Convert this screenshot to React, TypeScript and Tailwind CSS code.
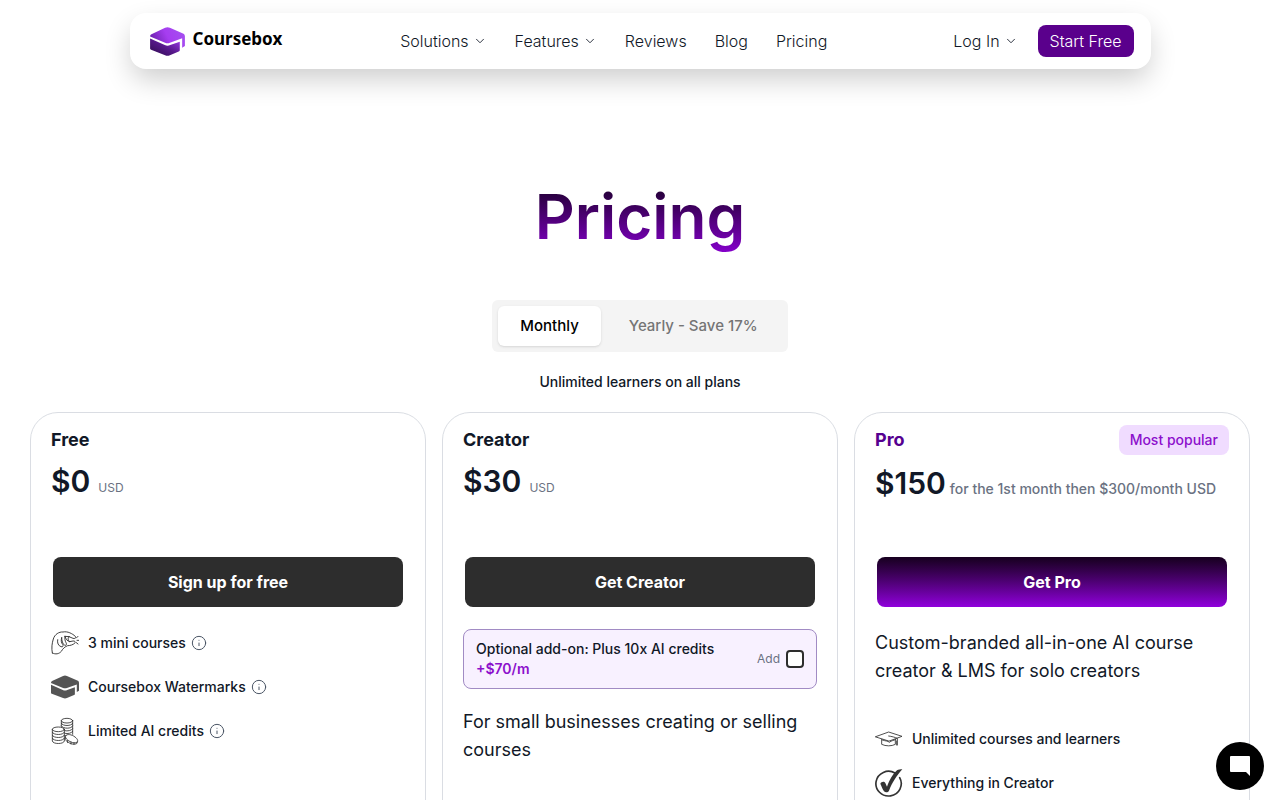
import type { ReactNode } from "react";
import { ChevronDown, Info } from "lucide-react";

const navLinks = [
  { label: "Solutions", menu: true },
  { label: "Features", menu: true },
  { label: "Reviews", menu: false },
  { label: "Blog", menu: false },
  { label: "Pricing", menu: false },
];

const CapLogo = ({ className, gradient }: { className: string; gradient?: boolean }) => (
  <svg viewBox="0 0 102 85" className={className} aria-hidden="true">
    <defs>
      <linearGradient id="lid" x1="0" y1="0.6" x2="1" y2="0.3">
        <stop offset="0" stopColor="#6a20ac" />
        <stop offset="0.5" stopColor="#a63df0" />
        <stop offset="1" stopColor="#a54ff0" />
      </linearGradient>
      <linearGradient id="body" x1="0" y1="1" x2="1" y2="0">
        <stop offset="0" stopColor="#2c0a4a" />
        <stop offset="0.5" stopColor="#56188a" />
        <stop offset="1" stopColor="#a03cf0" />
      </linearGradient>
    </defs>
    <path
      fill={gradient ? "url(#lid)" : "#555"}
      d="M0 27Q0 23 4 21L44 2Q51-1 58 2L98 20Q102 22 102 27V56L94 61V33L58 46Q51 49 44 46L0 28Z"
    />
    <path
      fill={gradient ? "url(#body)" : "#555"}
      d="M0 34L43 53Q51 57 59 53L87 43V68Q87 71 84 72L58 83Q51 86 44 83L3 67Q0 66 0 63Z"
    />
  </svg>
);

const PinchIcon = () => (
  <svg
    viewBox="0 0 84 84"
    className="w-7 h-7 shrink-0"
    fill="none"
    stroke="#333"
    strokeWidth="2.8"
    strokeLinecap="round"
    strokeLinejoin="round"
    aria-hidden="true"
  >
    <path d="M4 72C1 58 3 42 7 30C11 16 24 8 36 9C50 6 64 14 73 22C76 27 71 30 66 28L54 23" />
    <path d="M4 72C14 77 24 75 31 67C36 58 42 53 50 50C58 50 66 47 71 43C75 39 71 35 66 36L56 38" />
    <path d="M20 32C18 42 22 50 30 53C35 55 38 51 35 46C30 41 30 34 32 26" />
    <path d="M32 26C32 36 35 44 41 49C46 50 48 45 45 41C42 36 41 30 42 22" />
    <path d="M42 22C44 30 48 36 56 38M54 23C50 27 50 33 54 36M42 22L54 23" />
    <path d="M76 27L81 22M78 34L83 34M76 41L81 45" />
  </svg>
);

const CoinsIcon = () => (
  <svg
    viewBox="0 0 84 84"
    className="w-7 h-7 shrink-0"
    fill="none"
    stroke="#333"
    strokeWidth="2.6"
    strokeLinecap="round"
    aria-hidden="true"
  >
    <ellipse cx="48" cy="11" rx="17" ry="7" />
    <path d="M31 11V28M65 11V52M31 19C34 28 62 28 65 19M31 27C36 36 62 36 65 27M41 41C50 43 62 41 65 35M42 49C50 51 62 49 65 43" />
    <ellipse cx="22" cy="37" rx="18" ry="7" />
    <path d="M4 37V72C6 82 38 82 40 72V37M4 46C7 55 37 55 40 46M4 55C7 64 37 64 40 55M4 64C7 73 37 73 40 64" />
    <path d="M44 56C48 50 62 52 72 60C80 66 82 72 78 76C72 80 58 76 50 69C44 64 42 60 44 56Z" />
    <path d="M43 60V68C48 76 64 84 74 81C79 80 80 76 79 74M50 70V77M60 75V81M69 77V82" />
  </svg>
);

const GradCapIcon = () => (
  <svg
    viewBox="0 0 84 84"
    className="w-7 h-7 shrink-0"
    fill="none"
    stroke="#333"
    strokeWidth="2.6"
    strokeLinecap="round"
    strokeLinejoin="round"
    aria-hidden="true"
  >
    <path d="M2 35L41 21L81 34L43 48Z" />
    <path d="M20 43V58C32 64 50 64 61 58V43" />
    <path d="M22 45C33 49 38 47 43 52C50 46 56 47 61 44" />
    <path d="M41 33C50 34 60 37 67 40V60M65 60V48" />
  </svg>
);

const CheckIcon = () => (
  <svg viewBox="0 0 84 84" className="w-7 h-7 shrink-0" aria-hidden="true">
    <path
      d="M60 12A38 37 0 1 0 74 26"
      fill="none"
      stroke="#333"
      strokeWidth="5"
      strokeLinecap="round"
    />
    <path
      fill="#333"
      d="M16 44C19 37 28 36 31 42L36 53C43 34 54 14 66 4C70 1 77 1 82 1C66 18 51 42 42 65C39 71 31 71 27 67C22 60 20 52 16 44Z"
    />
  </svg>
);

const Feature = ({ icon, text, info }: { icon: ReactNode; text: string; info?: boolean }) => (
  <li className="flex items-center gap-[9px] h-7">
    {icon}
    <span className="text-sm font-medium">{text}</span>
    {info && (
      <button type="button" aria-label={`About ${text}`} className="-ml-1 text-gray-600">
        <Info size={16} strokeWidth={1.5} />
      </button>
    )}
  </li>
);

const Plan = ({
  name,
  price,
  note,
  action,
  popular,
  children,
}: {
  name: string;
  price: string;
  note: string;
  action: string;
  popular?: boolean;
  children: ReactNode;
}) => (
  <section className="min-h-[480px] px-5 pt-3 pb-10 border border-gray-300/80 rounded-[28px]">
    <div className="min-h-[132px]">
      <div className="flex items-center justify-between">
        <h2
          className={
            popular
              ? "text-lg leading-[30px] font-bold text-[#560090]"
              : "text-lg leading-[30px] font-bold"
          }
        >
          {name}
        </h2>
        {popular && (
          <span className="px-[11px] py-[5px] rounded-lg bg-[#f0dcff] text-sm font-medium text-[#8c10cc]">
            Most popular
          </span>
        )}
      </div>
      <p className={popular ? "flex items-baseline mt-2" : "flex items-baseline mt-1.5"}>
        <span className="text-3xl leading-10 font-semibold">{price}</span>
        {popular ? (
          <span className="ml-1 text-sm font-medium text-gray-500">{note}</span>
        ) : (
          <span className="ml-2 text-xs text-gray-500">{note}</span>
        )}
      </p>
    </div>
    <div className="px-0.5 mb-[22px]">
      <button
        type="button"
        className={
          popular
            ? "w-full h-[50px] rounded-lg font-bold text-white bg-linear-to-b from-[#17001f] to-[#9000dc]"
            : "w-full h-[50px] rounded-lg font-bold text-white bg-[#2d2d2d]"
        }
      >
        {action}
      </button>
    </div>
    {children}
  </section>
);

const Navbar = () => (
  <header className="sticky top-[13px] z-10 px-4">
    <nav className="flex items-center justify-between mx-auto max-w-[1021px] h-14 pl-5 pr-[17px] bg-white rounded-2xl shadow-[0_12px_28px_-2px_rgba(0,0,0,0.2)]">
      <a href="#" className="flex items-center gap-2">
        <CapLogo gradient className="w-[35px] h-[29px]" />
        <span className="pb-1 font-['Noto_Sans',sans-serif] text-[17px] leading-6 font-bold text-black">
          Coursebox
        </span>
      </a>
      {/* MAIN LINKS */}
      <ul className="flex items-center gap-7 mr-2 font-light">
        {navLinks.map((link) => (
          <li key={link.label}>
            <a href="#" className="flex items-center gap-1">
              {link.label}
              {link.menu && <ChevronDown size={14} strokeWidth={1.5} />}
            </a>
          </li>
        ))}
      </ul>
      {/* ACCOUNT */}
      <div className="flex items-center gap-5">
        <a href="#" className="flex items-center gap-1 font-light">
          Log In
          <ChevronDown size={14} strokeWidth={1.5} />
        </a>
        <a
          href="#"
          className="flex items-center h-8 px-3 rounded-lg font-light text-white bg-[#5a008c]"
        >
          Start Free
        </a>
      </div>
    </nav>
  </header>
);

const App = () => {
  return (
    <div className="min-h-screen pt-[13px] bg-white font-[Inter,sans-serif] text-[#111827]">
      <Navbar />
      <main className="px-[30px] pt-[106px] pb-10">
        <div className="flex flex-col items-center">
          <h1 className="text-[62px] leading-[84px] font-semibold text-transparent bg-clip-text bg-linear-to-b from-[#12001c] to-[#9000dc]">
            Pricing
          </h1>
          {/* BILLING PERIOD */}
          <div className="flex gap-1 mt-[41px] p-1.5 rounded-md bg-[#f4f4f4] text-[15px] font-medium">
            <button type="button" className="h-10 px-[22px] rounded-md bg-white text-black shadow-sm">
              Monthly
            </button>
            <button type="button" className="h-10 px-6 rounded-md text-[#757575]">
              Yearly - Save 17%
            </button>
          </div>
          <p className="mt-5 text-sm font-medium">Unlimited learners on all plans</p>
        </div>

        {/* PLANS */}
        <div className="grid grid-cols-1 md:grid-cols-3 gap-4 mt-5">
          <Plan name="Free" price="$0" note="USD" action="Sign up for free">
            <ul className="flex flex-col gap-4">
              <Feature icon={<PinchIcon />} text="3 mini courses" info />
              <Feature
                icon={<CapLogo className="w-7 h-6 shrink-0" />}
                text="Coursebox Watermarks"
                info
              />
              <Feature icon={<CoinsIcon />} text="Limited AI credits" info />
            </ul>
          </Plan>
          <Plan name="Creator" price="$30" note="USD" action="Get Creator">
            <label className="flex items-center justify-between px-3 py-[9px] border border-[#a18bc4] rounded-lg bg-[#f8f1ff]">
              <span className="text-sm font-medium">
                Optional add-on: Plus 10x AI credits
                <br />
                <span className="text-[#8c10cc] font-semibold">+$70/m</span>
              </span>
              <span className="flex items-center gap-1.5 text-xs text-gray-500">
                Add
                <input
                  type="checkbox"
                  className="appearance-none w-[18px] h-[18px] border-2 border-[#2d2d2d] rounded bg-white"
                />
              </span>
            </label>
            <p className="mt-[19px] text-lg leading-7">
              For small businesses creating or selling courses
            </p>
          </Plan>
          <Plan
            name="Pro"
            price="$150"
            note="for the 1st month then $300/month USD"
            action="Get Pro"
            popular
          >
            <p className="text-lg leading-7">
              Custom-branded all-in-one AI course creator &amp; LMS for solo creators
            </p>
            <ul className="flex flex-col gap-4 mt-10">
              <Feature icon={<GradCapIcon />} text="Unlimited courses and learners" />
              <Feature icon={<CheckIcon />} text="Everything in Creator" />
            </ul>
          </Plan>
        </div>
      </main>

      {/* CHAT LAUNCHER */}
      <button
        type="button"
        aria-label="Open chat"
        className="fixed right-4 bottom-2.5 z-20 flex items-center justify-center w-12 h-12 rounded-full bg-black"
      >
        <svg viewBox="0 0 20 20" className="w-5 h-5" fill="#fff" aria-hidden="true">
          <path d="M1 0H19Q20 0 20 1V20L16 16H1Q0 16 0 15V1Q0 0 1 0Z" />
        </svg>
      </button>
    </div>
  );
};

export default App;
